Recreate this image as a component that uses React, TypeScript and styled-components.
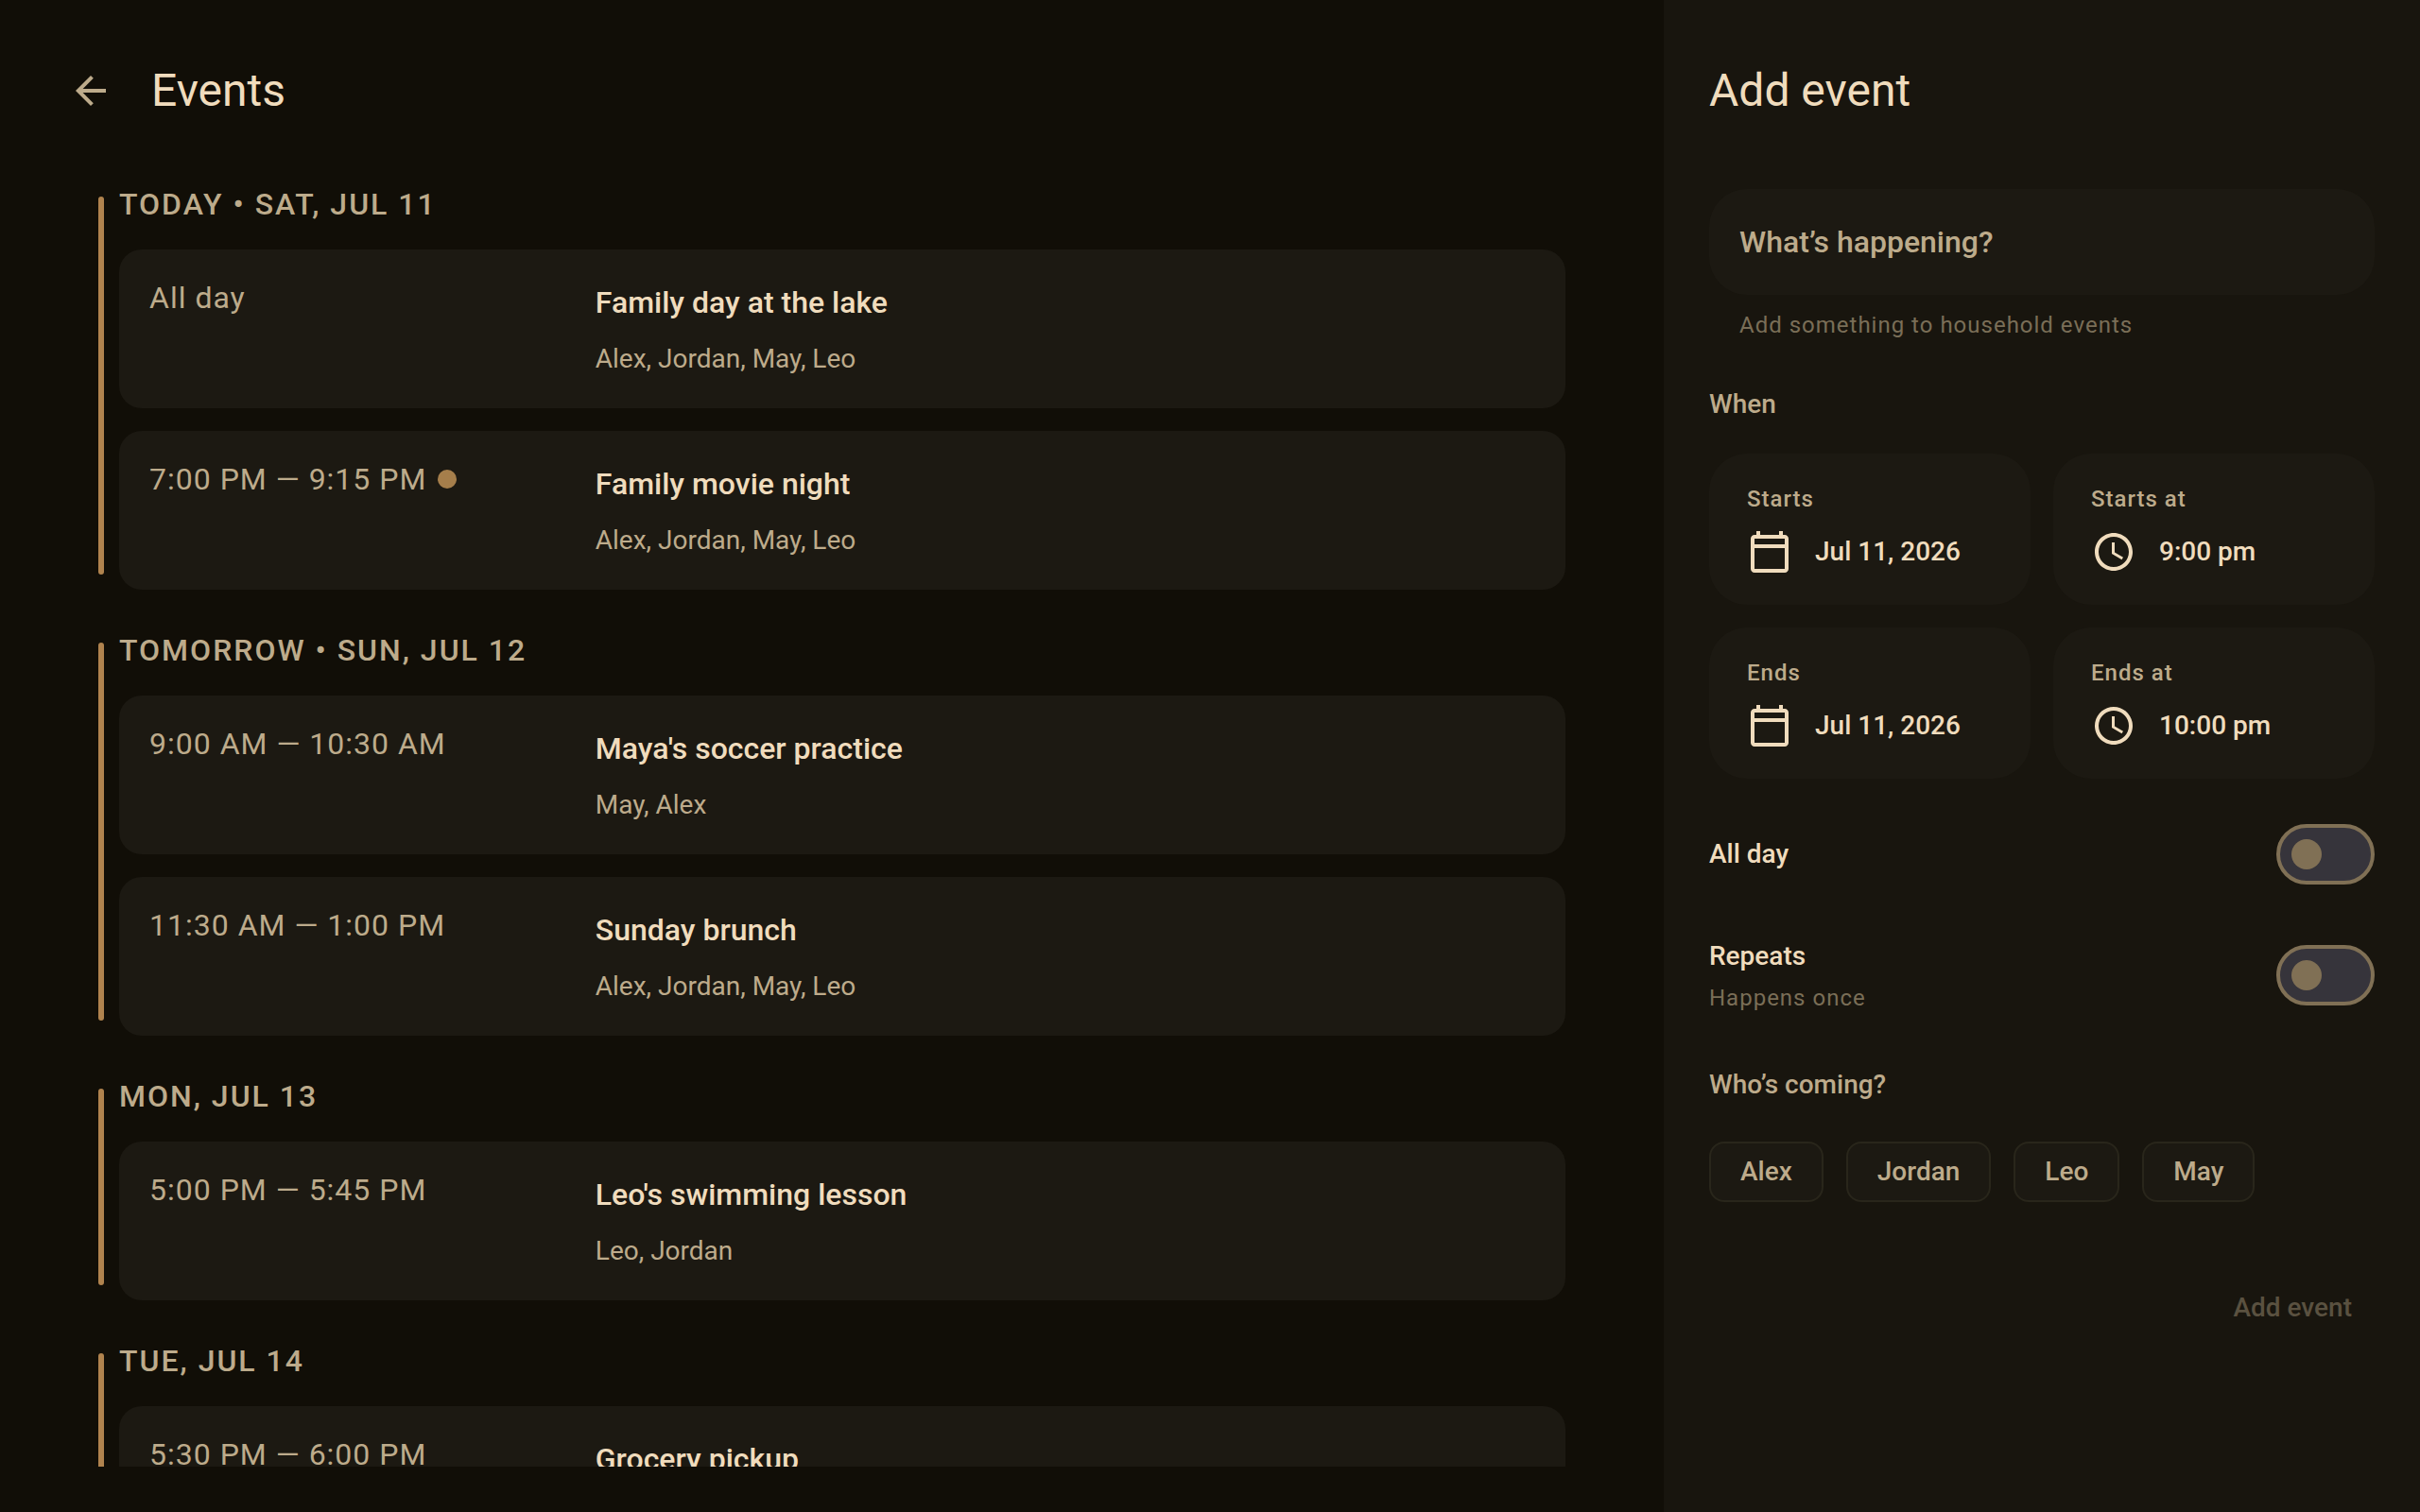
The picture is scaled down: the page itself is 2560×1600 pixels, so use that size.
import React, { useState } from "react";
import styled, { createGlobalStyle } from "styled-components";

const color = {
  page: "#110e07",
  panel: "#18150e",
  card: "#1c1912",
  outline: "#29261b",
  text: "#f0dcbd",
  muted: "#bdab8b",
  faint: "#7a6e57",
  disabled: "#5a5140",
  accent: "#b0834e",
  dot: "#a57e4b",
  switchLine: "#807055",
  switchTrack: "#36343b",
};

const GlobalStyle = createGlobalStyle`
  *, *::before, *::after { box-sizing: border-box; }
  body {
    margin: 0;
    background: ${color.page};
    color: ${color.text};
    font-family: Roboto, "Liberation Sans", sans-serif;
  }
  h1, h2, h3, p { margin: 0; font-weight: 400; }
  button, input { font: inherit; color: inherit; letter-spacing: inherit; }
  button { border: 0; padding: 0; background: none; cursor: pointer; text-align: left; }
`;

const Screen = styled.div`
  display: flex;
  height: 100vh;
`;

const Main = styled.main`
  display: flex;
  flex-direction: column;
  flex: 1;
  min-width: 0;
  gap: 48px;
  padding: 48px 0;
`;

const TopBar = styled.header`
  display: flex;
  align-items: center;
  gap: 16px;
  padding: 0 48px;
`;

const BackButton = styled.button`
  display: grid;
  place-items: center;
  width: 96px;
  height: 96px;
  border-radius: 50%;
  color: ${color.muted};
`;

const Icon = styled.svg`
  display: block;
  flex: none;
  width: 48px;
  height: 48px;
  fill: currentColor;
`;

const Title = styled.h1`
  font-size: 48px;
  line-height: 96px;
`;

const DayList = styled.div`
  display: flex;
  flex-direction: column;
  flex: 1;
  min-height: 0;
  gap: 40px;
  padding: 0 104px;
  overflow-y: auto;
  scrollbar-width: none;
`;

const Day = styled.section`
  display: flex;
  flex: none;
  gap: 16px;
`;

const DayBar = styled.div`
  width: 6px;
  margin: 16px 0;
  border-radius: 3px;
  background: ${color.accent};
`;

const DayBody = styled.div`
  display: flex;
  flex-direction: column;
  flex: 1;
  gap: 24px;
`;

const DayTitle = styled.h2`
  color: ${color.muted};
  font-size: 32px;
  font-weight: 500;
  line-height: 48px;
  letter-spacing: 2px;
  text-transform: uppercase;
`;

const EventCard = styled.article`
  display: flex;
  gap: 32px;
  padding: 32px;
  border-radius: 24px;
  background: ${color.card};
`;

const EventTime = styled.div`
  display: flex;
  align-items: center;
  align-self: flex-start;
  flex: none;
  gap: 12px;
  width: 30%;
  color: ${color.muted};
  font-size: 32px;
  line-height: 38px;
  letter-spacing: 1px;
`;

const LiveDot = styled.span`
  width: 20px;
  height: 20px;
  border-radius: 50%;
  background: ${color.dot};
`;

const EventDetails = styled.div`
  display: flex;
  flex-direction: column;
  gap: 16px;
`;

const EventName = styled.h3`
  font-size: 32px;
  font-weight: 500;
  line-height: 48px;
`;

const People = styled.p`
  color: ${color.muted};
  font-size: 28px;
  line-height: 40px;
`;

const Panel = styled.aside`
  flex: none;
  width: 31.25%;
  padding: 48px;
  background: ${color.panel};
`;

const Form = styled.form`
  display: flex;
  flex-direction: column;
  gap: 56px;
  margin-top: 56px;
`;

const Block = styled.div<{ $gap: number }>`
  display: flex;
  flex-direction: column;
  gap: ${(p) => p.$gap}px;
`;

const NameInput = styled.input`
  width: 100%;
  height: 112px;
  padding: 0 32px;
  border: 0;
  border-radius: 40px;
  outline: 0;
  background: ${color.card};
  font-size: 32px;
  font-weight: 500;
  &::placeholder { color: ${color.muted}; opacity: 1; }
`;

const Hint = styled.p<{ $inset?: boolean }>`
  padding: 0 ${(p) => (p.$inset ? 32 : 0)}px;
  color: ${color.faint};
  font-size: 24px;
  line-height: 32px;
  letter-spacing: 1px;
`;

const SectionTitle = styled.h2`
  color: ${color.muted};
  font-size: 28px;
  font-weight: 500;
  line-height: 40px;
`;

const PickerGrid = styled.div`
  display: grid;
  grid-template-columns: 1fr 1fr;
  gap: 24px;
`;

const Picker = styled.button`
  display: flex;
  flex-direction: column;
  gap: 16px;
  padding: 32px 40px;
  border-radius: 40px;
  background: ${color.card};
`;

const PickerLabel = styled.span`
  color: ${color.muted};
  font-size: 24px;
  font-weight: 500;
  line-height: 32px;
  letter-spacing: 1px;
`;

const PickerValue = styled.span`
  display: flex;
  align-items: center;
  gap: 24px;
  font-size: 28px;
  font-weight: 500;
  line-height: 48px;
`;

const SwitchRow = styled.div`
  display: flex;
  align-items: center;
  justify-content: space-between;
`;

const SwitchLabel = styled.label`
  font-size: 28px;
  font-weight: 500;
  line-height: 40px;
`;

const Switch = styled.input`
  appearance: none;
  display: flex;
  align-items: center;
  width: 104px;
  height: 64px;
  margin: 0;
  padding: 0 12px;
  border: 4px solid ${color.switchLine};
  border-radius: 32px;
  background: ${color.switchTrack};
  cursor: pointer;
  &::before {
    content: "";
    width: 32px;
    height: 32px;
    border-radius: 50%;
    background: ${color.switchLine};
  }
  &:checked { justify-content: flex-end; }
`;

const Chips = styled.div`
  display: flex;
  flex-wrap: wrap;
  gap: 24px;
`;

const Chip = styled.button<{ $on: boolean }>`
  padding: 10px 31px;
  border: 2px solid ${(p) => (p.$on ? color.accent : color.outline)};
  border-radius: 16px;
  background: ${color.card};
  color: ${color.muted};
  font-size: 28px;
  font-weight: 500;
  line-height: 40px;
`;

const Actions = styled.div`
  display: flex;
  justify-content: flex-end;
  padding-top: 16px;
`;

const SubmitButton = styled.button`
  padding: 20px 24px;
  color: ${color.disabled};
  font-size: 28px;
  font-weight: 500;
  line-height: 40px;
`;

const paths = {
  back: "M20 11H7.83l5.59-5.59L12 4l-8 8 8 8 1.41-1.41L7.83 13H20v-2z",
  calendar:
    "M20 3h-1V1h-2v2H7V1H5v2H4c-1.1 0-2 .9-2 2v16c0 1.1.9 2 2 2h16c1.1 0 2-.9 2-2V5c0-1.1-.9-2-2-2zm0 18H4V10h16v11zm0-13H4V5h16v3z",
  clock:
    "M11.99 2C6.47 2 2 6.48 2 12s4.47 10 9.99 10C17.52 22 22 17.52 22 12S17.52 2 11.99 2zM12 20c-4.42 0-8-3.58-8-8s3.58-8 8-8 8 3.58 8 8-3.58 8-8 8zm.5-13H11v6l5.25 3.15.75-1.23-4.5-2.67z",
};

const Glyph = ({ name }: { name: keyof typeof paths }) => (
  <Icon viewBox="0 0 24 24" aria-hidden="true">
    <path d={paths[name]} />
  </Icon>
);

type CalendarEvent = { time: string; name: string; people: string; live?: boolean };

const days: { title: string; events: CalendarEvent[] }[] = [
  {
    title: "Today • Sat, Jul 11",
    events: [
      { time: "All day", name: "Family day at the lake", people: "Alex, Jordan, May, Leo" },
      { time: "7:00 PM — 9:15 PM", name: "Family movie night", people: "Alex, Jordan, May, Leo", live: true },
    ],
  },
  {
    title: "Tomorrow • Sun, Jul 12",
    events: [
      { time: "9:00 AM — 10:30 AM", name: "Maya's soccer practice", people: "May, Alex" },
      { time: "11:30 AM — 1:00 PM", name: "Sunday brunch", people: "Alex, Jordan, May, Leo" },
    ],
  },
  {
    title: "Mon, Jul 13",
    events: [{ time: "5:00 PM — 5:45 PM", name: "Leo's swimming lesson", people: "Leo, Jordan" }],
  },
  {
    title: "Tue, Jul 14",
    events: [{ time: "5:30 PM — 6:00 PM", name: "Grocery pickup", people: "Alex" }],
  },
];

const pickers: { label: string; value: string; icon: "calendar" | "clock" }[] = [
  { label: "Starts", value: "Jul 11, 2026", icon: "calendar" },
  { label: "Starts at", value: "9:00 pm", icon: "clock" },
  { label: "Ends", value: "Jul 11, 2026", icon: "calendar" },
  { label: "Ends at", value: "10:00 pm", icon: "clock" },
];

export default function App() {
  const [name, setName] = useState("");
  const [guests, setGuests] = useState<string[]>([]);
  const toggleGuest = (guest: string) =>
    setGuests((g) => (g.includes(guest) ? g.filter((x) => x !== guest) : [...g, guest]));

  return (
    <Screen>
      <GlobalStyle />
      <Main>
        <TopBar>
          <BackButton type="button" aria-label="Back">
            <Glyph name="back" />
          </BackButton>
          <Title>Events</Title>
        </TopBar>
        <DayList>
          {days.map((day) => (
            <Day key={day.title}>
              <DayBar />
              <DayBody>
                <DayTitle>{day.title}</DayTitle>
                {day.events.map((event) => (
                  <EventCard key={event.name}>
                    <EventTime>
                      {event.time}
                      {event.live && <LiveDot />}
                    </EventTime>
                    <EventDetails>
                      <EventName>{event.name}</EventName>
                      <People>{event.people}</People>
                    </EventDetails>
                  </EventCard>
                ))}
              </DayBody>
            </Day>
          ))}
        </DayList>
      </Main>

      <Panel>
        <Title as="h2">Add event</Title>
        <Form onSubmit={(e) => e.preventDefault()}>
          <Block $gap={48}>
            <Block $gap={16}>
              <NameInput
                aria-label="What’s happening?"
                placeholder="What’s happening?"
                value={name}
                onChange={(e) => setName(e.target.value)}
              />
              <Hint $inset>Add something to household events</Hint>
            </Block>
            <Block $gap={32}>
              <SectionTitle>When</SectionTitle>
              <PickerGrid>
                {pickers.map((p) => (
                  <Picker key={p.label} type="button">
                    <PickerLabel>{p.label}</PickerLabel>
                    <PickerValue>
                      <Glyph name={p.icon} />
                      {p.value}
                    </PickerValue>
                  </Picker>
                ))}
              </PickerGrid>
            </Block>
            <SwitchRow>
              <SwitchLabel htmlFor="all-day">All day</SwitchLabel>
              <Switch id="all-day" type="checkbox" role="switch" />
            </SwitchRow>
          </Block>
          <SwitchRow>
            <Block $gap={8}>
              <SwitchLabel htmlFor="repeats">Repeats</SwitchLabel>
              <Hint>Happens once</Hint>
            </Block>
            <Switch id="repeats" type="checkbox" role="switch" />
          </SwitchRow>
          <Block $gap={40}>
            <SectionTitle>Who’s coming?</SectionTitle>
            <Chips>
              {["Alex", "Jordan", "Leo", "May"].map((guest) => (
                <Chip
                  key={guest}
                  type="button"
                  $on={guests.includes(guest)}
                  aria-pressed={guests.includes(guest)}
                  onClick={() => toggleGuest(guest)}
                >
                  {guest}
                </Chip>
              ))}
            </Chips>
          </Block>
          <Actions>
            <SubmitButton type="submit" disabled={!name}>
              Add event
            </SubmitButton>
          </Actions>
        </Form>
      </Panel>
    </Screen>
  );
}
